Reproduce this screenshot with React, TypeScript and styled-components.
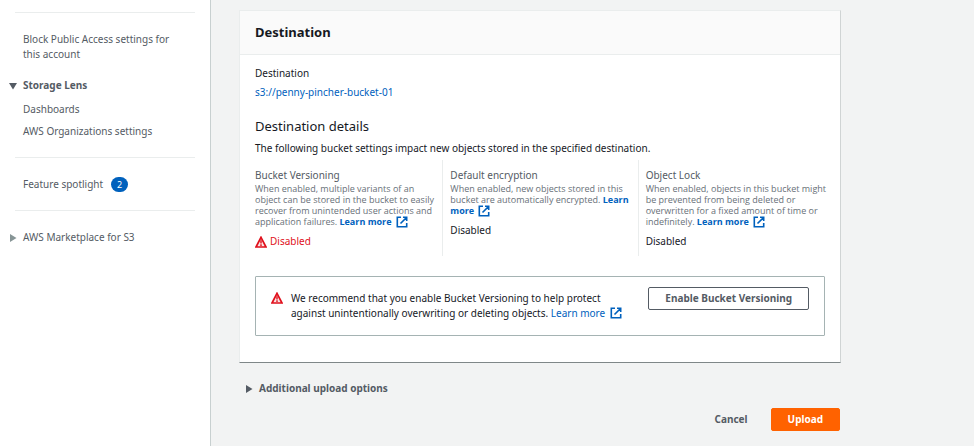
import React from "react";
import styled, { createGlobalStyle } from "styled-components";

const GlobalStyle = createGlobalStyle`
  * { box-sizing: border-box; }
  body {
    margin: 0;
    background: #f2f3f3;
    color: #16191f;
    font-family: "Noto Sans", "Open Sans", sans-serif;
    font-size: 10px;
    line-height: 15px;
  }
  h2, h3, p, ul { margin: 0; padding: 0; }
  button { font: inherit; cursor: pointer; }
`;

const Page = styled.div`
  display: flex;
  min-height: 100vh;
`;

const Sidebar = styled.nav`
  flex: 0 0 211px;
  padding: 12px 15px 0;
  background: #fff;
  border-right: 1px solid #c8d0d0;
  color: #545b64;
`;

const Divider = styled.hr`
  height: 1px;
  margin: 18px 0 19px;
  border: 0;
  background: #eaeded;
  &:first-child { margin-top: 0; }
`;

const NavList = styled.ul`
  display: flex;
  flex-direction: column;
  gap: 7px;
  margin-top: 9px;
  list-style: none;
`;

const NavLink = styled.a`
  display: block;
  padding: 0 8px;
  color: inherit;
  text-decoration: none;
`;

const NavToggle = styled.button<{ $bold?: boolean; $spaced?: boolean }>`
  display: flex;
  align-items: center;
  gap: 6px;
  margin: ${p => (p.$spaced ? "16px" : "0")} 0 0 -6px;
  padding: 0;
  border: 0;
  background: none;
  color: inherit;
  font-weight: ${p => (p.$bold ? 700 : 400)};
`;

const SpotlightLink = styled(NavLink)`
  display: flex;
  align-items: center;
  gap: 8px;
`;

const Badge = styled.span`
  height: 15px;
  padding: 0 6px;
  border-radius: 8px;
  background: #0061bd;
  color: #fff;
  font-size: 9px;
`;

const Main = styled.main`
  flex: 1;
  min-width: 0;
  padding: 10px 133px 14px 28px;
`;

const Card = styled.section`
  border: 1px solid #eaeded;
  border-right-color: #d0d4d4;
  border-bottom-color: #7f8788;
  background: #fff;
`;

const CardHeader = styled.header`
  padding: 12px 15px;
  border-bottom: 1px solid #eaeded;
  background: #fafafa;
`;

const CardTitle = styled.h2`
  font-size: 13px;
  line-height: 19px;
`;

const CardBody = styled.div`
  padding: 11px 15px 26px;
`;

const TextLink = styled.a<{ $bold?: boolean }>`
  color: #0061bd;
  font-weight: ${p => (p.$bold ? 700 : 400)};
  text-decoration: none;
`;

const BucketLine = styled.p`
  margin-top: 4px;
`;

const SubTitle = styled.h3`
  margin: 17px 0 6px;
  font-size: 13px;
  font-weight: 400;
  line-height: 18px;
`;

const Settings = styled.div`
  display: grid;
  grid-template-columns: repeat(3, 1fr);
  margin: 4px -8px 20px;
`;

const Setting = styled.div`
  min-height: 96px;
  padding: 8px 0 7px 7px;
  border-left: 1px solid #eaeded;
  &:first-child { border-left-color: transparent; }
`;

const SettingName = styled.div`
  color: #545b64;
`;

const Hint = styled.p`
  color: #687078;
  font-family: "Open Sans", "Noto Sans", sans-serif;
  font-size: 9px;
  line-height: 11px;
  white-space: nowrap;
`;

const Value = styled.div<{ $error?: boolean }>`
  display: flex;
  align-items: center;
  gap: 3px;
  margin-top: 7px;
  color: ${p => (p.$error ? "#e0101c" : "inherit")};
`;

const Alert = styled.div`
  display: flex;
  align-items: flex-start;
  gap: 8px;
  padding: 10px 15px;
  border: 1px solid #a5b3b3;
  border-radius: 1px;
`;

const AlertIcon = styled.span`
  display: flex;
  padding-top: 5px;
`;

const AlertText = styled.p`
  flex: 1;
  min-height: 38px;
  padding-top: 4px;
`;

const Button = styled.button<{ $kind: "outline" | "plain" | "primary" }>`
  height: 23px;
  padding: 0 16px;
  border: 1px solid ${p => ({ outline: "#545b64", plain: "transparent", primary: "#ff6200" })[p.$kind]};
  border-radius: 2px;
  background: ${p => ({ outline: "#fff", plain: "transparent", primary: "#ff6200" })[p.$kind]};
  color: ${p => (p.$kind === "primary" ? "#fff" : "#545b64")};
  font-weight: 700;
  line-height: 15px;
`;

const Expander = styled.button`
  display: flex;
  align-items: center;
  gap: 6px;
  margin: 18px 0 12px 6px;
  padding: 0;
  border: 0;
  background: none;
  color: #545b64;
  font-weight: 700;
`;

const Actions = styled.div`
  display: flex;
  justify-content: flex-end;
  gap: 6px;
  padding-right: 1px;
`;

const InlineIcon = styled.svg`
  margin: -4px 0 -2px 2px;
  vertical-align: middle;
`;

function Caret({ open, color = "#545b64" }: { open?: boolean; color?: string }) {
  return (
    <svg width="8" height="8" viewBox="0 0 8 8" aria-hidden="true">
      <path d={open ? "M0 1h8L4 7.5z" : "M1 0v8l6.5-4z"} fill={color} />
    </svg>
  );
}

function Warning() {
  return (
    <svg width="12" height="12" viewBox="0 0 12 12" fill="none" stroke="#e0101c" aria-hidden="true">
      <path d="M6 1.3 11 11H1z" strokeWidth="1.7" fill="#fbe3e4" />
      <path d="M6 4.3v3.2M6 8.2v1.8" strokeWidth="1.4" />
    </svg>
  );
}

function External() {
  return (
    <InlineIcon width="12" height="12" viewBox="0 0 12 12" fill="none" stroke="#0061bd" strokeWidth="1.6" aria-hidden="true">
      <path d="M5 1.3H1.3v9.4h9.4V7M7 1.3h3.7V5M10.5 1.5 4.5 7.5" />
    </InlineIcon>
  );
}

export default function App() {
  return (
    <>
      <GlobalStyle />
      <Page>
        <Sidebar>
          <Divider />
          <NavLink href="#block">Block Public Access settings for this account</NavLink>
          <NavToggle $bold $spaced aria-expanded="true"><Caret open />Storage Lens</NavToggle>
          <NavList>
            <li><NavLink href="#dashboards">Dashboards</NavLink></li>
            <li><NavLink href="#organizations">AWS Organizations settings</NavLink></li>
          </NavList>
          <Divider />
          <SpotlightLink href="#spotlight">Feature spotlight <Badge>2</Badge></SpotlightLink>
          <Divider />
          <NavToggle aria-expanded="false"><Caret color="#879596" />AWS Marketplace for S3</NavToggle>
        </Sidebar>
        <Main>
          <Card>
            <CardHeader><CardTitle>Destination</CardTitle></CardHeader>
            <CardBody>
              <p>Destination</p>
              <BucketLine><TextLink href="#bucket">s3://penny-pincher-bucket-01</TextLink></BucketLine>
              <SubTitle>Destination details</SubTitle>
              <p>The following bucket settings impact new objects stored in the specified destination.</p>
              <Settings>
                <Setting>
                  <SettingName>Bucket Versioning</SettingName>
                  <Hint>
                    When enabled, multiple variants of an<br />object can be stored in the bucket to easily<br />
                    recover from unintended user actions and<br />application failures.{" "}
                    <TextLink $bold href="#versioning">Learn more <External /></TextLink>
                  </Hint>
                  <Value $error><Warning />Disabled</Value>
                </Setting>
                <Setting>
                  <SettingName>Default encryption</SettingName>
                  <Hint>
                    When enabled, new objects stored in this<br />bucket are automatically encrypted.{" "}
                    <TextLink $bold href="#encryption">Learn<br />more <External /></TextLink>
                  </Hint>
                  <Value>Disabled</Value>
                </Setting>
                <Setting>
                  <SettingName>Object Lock</SettingName>
                  <Hint>
                    When enabled, objects in this bucket might<br />be prevented from being deleted or<br />
                    overwritten for a fixed amount of time or<br />indefinitely.{" "}
                    <TextLink $bold href="#lock">Learn more <External /></TextLink>
                  </Hint>
                  <Value>Disabled</Value>
                </Setting>
              </Settings>
              <Alert>
                <AlertIcon><Warning /></AlertIcon>
                <AlertText>
                  We recommend that you enable Bucket Versioning to help protect<br />
                  against unintentionally overwriting or deleting objects.{" "}
                  <TextLink href="#recommend">Learn more <External /></TextLink>
                </AlertText>
                <Button $kind="outline">Enable Bucket Versioning</Button>
              </Alert>
            </CardBody>
          </Card>
          <Expander aria-expanded="false"><Caret />Additional upload options</Expander>
          <Actions>
            <Button $kind="plain">Cancel</Button>
            <Button $kind="primary">Upload</Button>
          </Actions>
        </Main>
      </Page>
    </>
  );
}
